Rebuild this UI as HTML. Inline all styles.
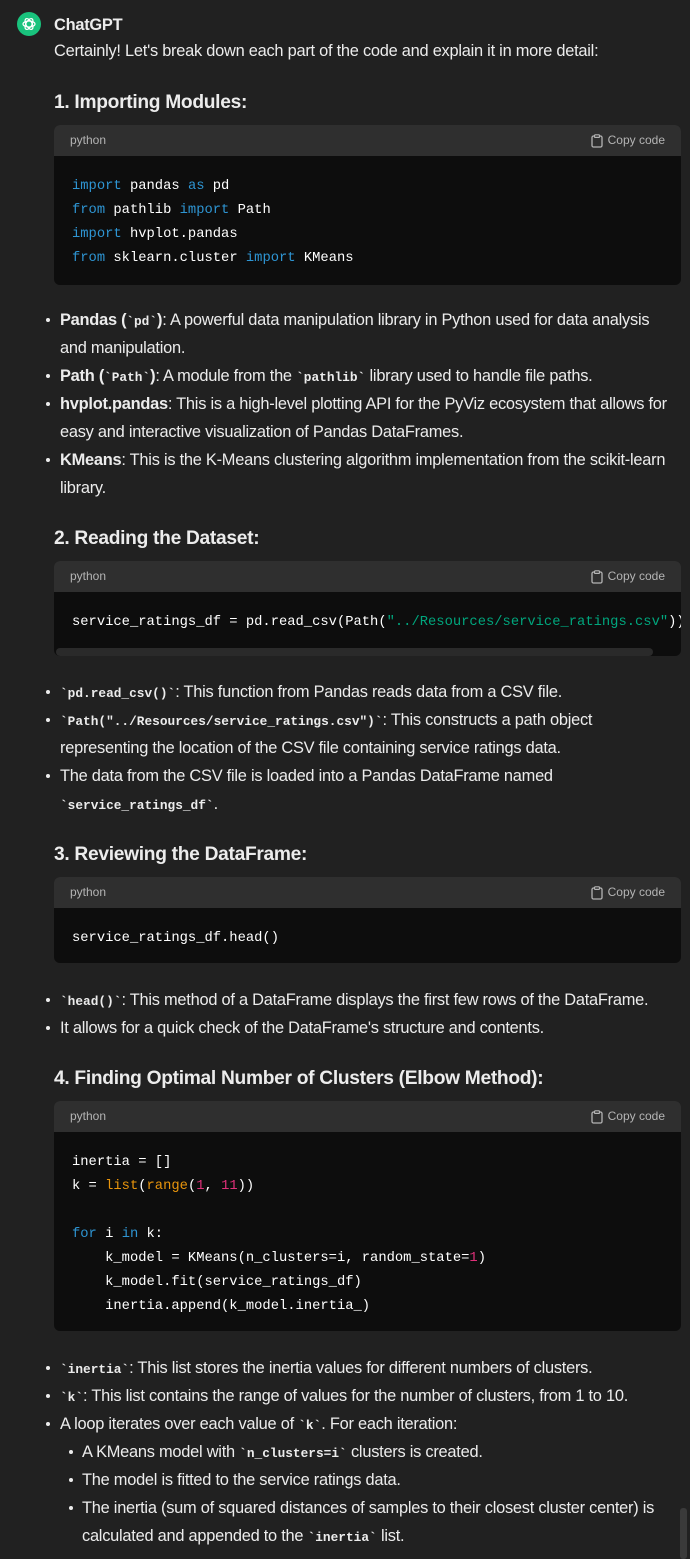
<!DOCTYPE html>
<html><head><meta charset="utf-8"><style>
body{margin:0;width:690px;height:1559px;background:#212121;position:relative;overflow:hidden;font-family:"Liberation Sans",sans-serif;color:#ececec;}
.t{position:absolute;font-size:16.4px;line-height:28px;white-space:nowrap;letter-spacing:-0.25px;margin-top:2px;}
.h{position:absolute;left:54px;font-size:19.2px;font-weight:bold;line-height:28px;white-space:nowrap;letter-spacing:-0.3px;margin-top:2px;}
.d{position:absolute;width:4px;height:4px;border-radius:2px;background:#ececec;margin-top:2px;}
code{font-family:"Liberation Mono",monospace;font-weight:bold;font-size:12.8px;letter-spacing:0;}
.box{position:absolute;left:54px;width:627px;background:#0d0d0d;border-radius:6px;overflow:hidden;}
.hd{height:31px;background:#2f2f2f;position:relative;font-size:12px;color:#b4b4b4;}
.hd .l{position:absolute;left:16px;top:8px;}
.hd .r{position:absolute;right:16px;top:8px;}
.hd svg{position:absolute;right:78px;top:9px;}
pre{margin:0;position:absolute;left:18px;font-family:"Liberation Mono",monospace;font-size:13.8px;line-height:24px;color:#fff;margin-top:2px;}
.k{color:#2e95d3}.f{color:#e9950c}.n{color:#df3079}.s{color:#00a67d}
</style></head><body>
<svg style="position:absolute;left:17px;top:12px" width="24" height="24" viewBox="0 0 24 24"><circle cx="12" cy="12" r="12" fill="#19c37d"/><g fill="none" stroke="#fff" stroke-width="1.2"><ellipse cx="12" cy="12" rx="6" ry="3" transform="rotate(0 12 12)"/><ellipse cx="12" cy="12" rx="6" ry="3" transform="rotate(60 12 12)"/><ellipse cx="12" cy="12" rx="6" ry="3" transform="rotate(120 12 12)"/></g></svg>
<div class="t" style="left:54px;top:9px;font-weight:bold;">ChatGPT</div>
<div class="t" style="left:54px;top:35px;">Certainly! Let's break down each part of the code and explain it in more detail:</div>

<div class="h" style="top:87px">1. Importing Modules:</div>
<div class="box" style="top:125px;height:160px"><div class="hd"><span class="l">python</span><svg width="12" height="14" viewBox="0 0 12 14"><rect x="1" y="2" width="10" height="11" rx="1.5" fill="none" stroke="#b4b4b4" stroke-width="1.3"/><rect x="3.5" y="0.8" width="5" height="2.6" rx="0.8" fill="#2f2f2f" stroke="#b4b4b4" stroke-width="1.2"/></svg><span class="r">Copy code</span></div>
<pre style="top:48px"><span class="k">import</span> pandas <span class="k">as</span> pd
<span class="k">from</span> pathlib <span class="k">import</span> Path
<span class="k">import</span> hvplot.pandas
<span class="k">from</span> sklearn.cluster <span class="k">import</span> KMeans</pre></div>

<div class="d" style="left:46px;top:316px"></div><div class="t" style="left:60px;top:304px"><b>Pandas (<code>`pd`</code>)</b>: A powerful data manipulation library in Python used for data analysis</div>
<div class="t" style="left:60px;top:332px">and manipulation.</div>
<div class="d" style="left:46px;top:372px"></div><div class="t" style="left:60px;top:360px"><b>Path (<code>`Path`</code>)</b>: A module from the <code>`pathlib`</code> library used to handle file paths.</div>
<div class="d" style="left:46px;top:400px"></div><div class="t" style="left:60px;top:388px"><b>hvplot.pandas</b>: This is a high-level plotting API for the PyViz ecosystem that allows for</div>
<div class="t" style="left:60px;top:416px">easy and interactive visualization of Pandas DataFrames.</div>
<div class="d" style="left:46px;top:456px"></div><div class="t" style="left:60px;top:444px"><b>KMeans</b>: This is the K-Means clustering algorithm implementation from the scikit-learn</div>
<div class="t" style="left:60px;top:472px">library.</div>

<div class="h" style="top:523px">2. Reading the Dataset:</div>
<div class="box" style="top:561px;height:95px"><div class="hd"><span class="l">python</span><svg width="12" height="14" viewBox="0 0 12 14"><rect x="1" y="2" width="10" height="11" rx="1.5" fill="none" stroke="#b4b4b4" stroke-width="1.3"/><rect x="3.5" y="0.8" width="5" height="2.6" rx="0.8" fill="#2f2f2f" stroke="#b4b4b4" stroke-width="1.2"/></svg><span class="r">Copy code</span></div>
<pre style="top:48px">service_ratings_df = pd.read_csv(Path(<span class="s">"../Resources/service_ratings.csv"</span>))</pre>
<div style="position:absolute;left:2px;top:87px;width:597px;height:8px;border-radius:4px;background:#2a2a2a"></div></div>

<div class="d" style="left:46px;top:688px"></div><div class="t" style="left:60px;top:676px"><code>`pd.read_csv()`</code>: This function from Pandas reads data from a CSV file.</div>
<div class="d" style="left:46px;top:716px"></div><div class="t" style="left:60px;top:704px"><code>`Path("../Resources/service_ratings.csv")`</code>: This constructs a path object</div>
<div class="t" style="left:60px;top:732px">representing the location of the CSV file containing service ratings data.</div>
<div class="d" style="left:46px;top:772px"></div><div class="t" style="left:60px;top:760px">The data from the CSV file is loaded into a Pandas DataFrame named</div>
<div class="t" style="left:60px;top:788px"><code>`service_ratings_df`</code>.</div>

<div class="h" style="top:839px">3. Reviewing the DataFrame:</div>
<div class="box" style="top:877px;height:86px"><div class="hd"><span class="l">python</span><svg width="12" height="14" viewBox="0 0 12 14"><rect x="1" y="2" width="10" height="11" rx="1.5" fill="none" stroke="#b4b4b4" stroke-width="1.3"/><rect x="3.5" y="0.8" width="5" height="2.6" rx="0.8" fill="#2f2f2f" stroke="#b4b4b4" stroke-width="1.2"/></svg><span class="r">Copy code</span></div>
<pre style="top:48px">service_ratings_df.head()</pre></div>

<div class="d" style="left:46px;top:996px"></div><div class="t" style="left:60px;top:984px"><code>`head()`</code>: This method of a DataFrame displays the first few rows of the DataFrame.</div>
<div class="d" style="left:46px;top:1024px"></div><div class="t" style="left:60px;top:1012px">It allows for a quick check of the DataFrame's structure and contents.</div>

<div class="h" style="top:1063px">4. Finding Optimal Number of Clusters (Elbow Method):</div>
<div class="box" style="top:1101px;height:230px"><div class="hd"><span class="l">python</span><svg width="12" height="14" viewBox="0 0 12 14"><rect x="1" y="2" width="10" height="11" rx="1.5" fill="none" stroke="#b4b4b4" stroke-width="1.3"/><rect x="3.5" y="0.8" width="5" height="2.6" rx="0.8" fill="#2f2f2f" stroke="#b4b4b4" stroke-width="1.2"/></svg><span class="r">Copy code</span></div>
<pre style="top:48px">inertia = []
k = <span class="f">list</span>(<span class="f">range</span>(<span class="n">1</span>, <span class="n">11</span>))

<span class="k">for</span> i <span class="k">in</span> k:
    k_model = KMeans(n_clusters=i, random_state=<span class="n">1</span>)
    k_model.fit(service_ratings_df)
    inertia.append(k_model.inertia_)</pre></div>

<div class="d" style="left:46px;top:1364px"></div><div class="t" style="left:60px;top:1352px"><code>`inertia`</code>: This list stores the inertia values for different numbers of clusters.</div>
<div class="d" style="left:46px;top:1392px"></div><div class="t" style="left:60px;top:1380px"><code>`k`</code>: This list contains the range of values for the number of clusters, from 1 to 10.</div>
<div class="d" style="left:46px;top:1420px"></div><div class="t" style="left:60px;top:1408px">A loop iterates over each value of <code>`k`</code>. For each iteration:</div>
<div class="d" style="left:69px;top:1448px"></div><div class="t" style="left:82px;top:1436px">A KMeans model with <code>`n_clusters=i`</code> clusters is created.</div>
<div class="d" style="left:69px;top:1476px"></div><div class="t" style="left:82px;top:1464px">The model is fitted to the service ratings data.</div>
<div class="d" style="left:69px;top:1504px"></div><div class="t" style="left:82px;top:1492px">The inertia (sum of squared distances of samples to their closest cluster center) is</div>
<div class="t" style="left:82px;top:1520px">calculated and appended to the <code>`inertia`</code> list.</div>
<div style="position:absolute;left:680px;top:1508px;width:7px;height:51px;border-radius:3px;background:#3a3a3a"></div>
</body></html>
